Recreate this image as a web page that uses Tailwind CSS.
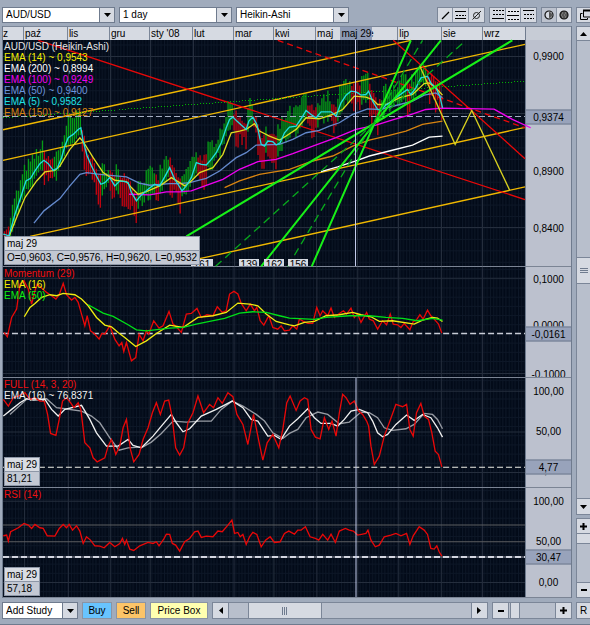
<!DOCTYPE html>
<html lang="pl">
<head>
<meta charset="utf-8">
<meta name="viewport" content="width=device-width, initial-scale=1">
<title>AUD/USD</title>
<script src="https://cdn.jsdelivr.net/npm/@tailwindcss/browser@4"></script>
</head>
<body class="flex h-screen min-h-[480px] flex-col overflow-hidden bg-[#a0abbc] pt-[7px] pl-[2px] font-['Liberation_Sans',Arial,sans-serif] text-[10px] leading-[11px] text-black">

<svg class="absolute size-0" aria-hidden="true">
  <defs>
    <pattern id="gridPrice" width="28" height="34.4" patternUnits="userSpaceOnUse" patternTransform="translate(73 168)"><path d="M1.5 0V35M10.5 0V35M19.5 0V35M0 1.5H28" stroke="#0d1727" stroke-width="3"/></pattern>
    <pattern id="gridStudy" width="28" height="27.5" patternUnits="userSpaceOnUse" patternTransform="translate(73 838)"><path d="M1.5 0V28M10.5 0V28M19.5 0V28M0 1.5H28" stroke="#0d1727" stroke-width="3"/></pattern>
    <path id="months" d="M73.500 0V1800M205.500 0V1800M331.500 0V1800M451.500 0V1800M580.500 0V1800M703.500 0V1800M823.500 0V1800M952.500 0V1800M1075.500 0V1800M1198.500 0V1800M1327.500 0V1800M1450.500 0V1800"/>
  </defs>
</svg>

<header class="flex h-4 shrink-0 items-stretch">
  <div class="flex min-w-0 gap-1">
    <label class="relative block w-[113px]"><span class="sr-only">Instrument</span>
      <select class="block h-4 w-full appearance-none border border-[#6f7b8e] bg-white pl-[3px] text-[10px] leading-[12px]"><option>AUD/USD</option></select>
      <span class="pointer-events-none absolute top-px right-px flex h-[14px] w-[15px] items-center justify-center border-l border-[#6f7b8e] bg-[#d6dae2]"><svg width="7" height="4" viewBox="0 0 7 4"><path d="M0 0H7L3.5 4Z"/></svg></span>
    </label>
    <label class="relative block w-[113px]"><span class="sr-only">Interval</span>
      <select class="block h-4 w-full appearance-none border border-[#6f7b8e] bg-white pl-[3px] text-[10px] leading-[12px]"><option>1 day</option></select>
      <span class="pointer-events-none absolute top-px right-px flex h-[14px] w-[15px] items-center justify-center border-l border-[#6f7b8e] bg-[#d6dae2]"><svg width="7" height="4" viewBox="0 0 7 4"><path d="M0 0H7L3.5 4Z"/></svg></span>
    </label>
    <label class="relative block w-[113px]"><span class="sr-only">Chart type</span>
      <select class="block h-4 w-full appearance-none border border-[#6f7b8e] bg-white pl-[3px] text-[10px] leading-[12px]"><option>Heikin-Ashi</option></select>
      <span class="pointer-events-none absolute top-px right-px flex h-[14px] w-[15px] items-center justify-center border-l border-[#6f7b8e] bg-[#d6dae2]"><svg width="7" height="4" viewBox="0 0 7 4"><path d="M0 0H7L3.5 4Z"/></svg></span>
    </label>
  </div>
  <div class="ml-auto flex gap-1">
    <div class="flex divide-x divide-[#8a94a4] border border-[#7b8698] bg-[#d6dae2]">
      <button aria-label="Trend line" class="flex w-[15px] items-center justify-center"><svg width="14" height="14" viewBox="0 0 14 14" fill="none" stroke="#000"><path d="M4 11L11 4" stroke-width="1.300"/></svg></button>
      <button aria-label="Horizontal lines" class="flex w-[16px] items-center justify-center"><svg width="14" height="14" viewBox="0 0 14 14" fill="none" stroke="#000"><path d="M1 3.500H12M1 10.500H12"/><path d="M2 7.500H12" stroke-dasharray="2 1"/></svg></button>
      <button aria-label="Remove drawings" class="flex w-[15px] items-center justify-center"><svg width="14" height="14" viewBox="0 0 14 14" fill="none" stroke="#222"><circle cx="6.500" cy="7.500" r="3"/><path d="M2.500 11.500L11 3"/></svg></button>
    </div>
    <div class="flex divide-x divide-[#8a94a4] border border-[#7b8698] bg-[#d6dae2]">
      <button aria-label="Grid style 1" class="flex w-[16px] items-center justify-center"><svg width="14" height="14" viewBox="0 0 14 14" fill="none" stroke="#000"><path d="M2 2.500H13M2 6.500H13" stroke-dasharray="2 1"/><path d="M1 10.500H13"/></svg></button>
      <button aria-label="Grid style 2" aria-pressed="true" class="flex w-[15px] items-center justify-center bg-[#e4e6ec]"><svg width="14" height="14" viewBox="0 0 14 14" fill="none" stroke="#000"><path d="M2 3.500H13M2 11.500H13" stroke-dasharray="2 1"/><path d="M1 7.500H13"/></svg></button>
      <button aria-label="Grid style 3" class="flex w-[15px] items-center justify-center"><svg width="14" height="14" viewBox="0 0 14 14" fill="none" stroke="#000"><path d="M1 2.500H12"/><path d="M2 6.500H12M2 10.500H12" stroke-dasharray="2 1"/></svg></button>
    </div>
    <div class="flex divide-x divide-[#8a94a4] border border-[#7b8698] bg-[#d6dae2]">
      <button aria-label="Contrast" class="flex w-[15px] items-center justify-center bg-[#bcc2ce]"><svg width="14" height="14" viewBox="0 0 14 14"><circle cx="7" cy="7" r="4" fill="#d6dae2" stroke="#111" stroke-width="1.200"/><path d="M7 4a3 3 0 0 1 0 6Z" fill="#555"/></svg></button>
      <button aria-label="Shading" class="flex w-[14px] items-center justify-center"><svg width="14" height="14" viewBox="0 0 14 14"><circle cx="7" cy="7" r="4" fill="#555" stroke="#111" stroke-width="1.200"/><path d="M5 5h1m2 0h1M4 7h1m2 0h1M5 9h1m2 0h1" stroke="#999"/></svg></button>
    </div>
    <button aria-label="Detach window" class="flex w-[14px] items-center overflow-hidden border border-r-0 border-[#7b8698] bg-[#d6dae2] pl-[2px]"><svg class="shrink-0" width="13" height="12" viewBox="0 0 13 12" fill="none" stroke="#000"><path d="M4.500 1V8H12V1.500" /><path d="M4 1.500H13" stroke-width="2"/><path d="M3.500 4.500H1.500V10.500H8.500V9"/></svg></button>
  </div>
</header>

<main class="mt-[3px] flex min-h-0 flex-1 gap-1">
  <div class="flex min-w-0 flex-1 flex-col border-r border-l border-[#6f7b8e]">
    <div class="relative flex h-[14px] shrink-0 border-t border-[#7b8698] bg-[#d6dae2] text-[10px] leading-[14px]">
      <div class="flex min-w-0 flex-1 divide-x divide-[#7b8698]">
        <span class="grow-[21] basis-0">z</span><span class="grow-[44] basis-0 pl-px">paź</span><span class="grow-[42] basis-0 pl-px">lis</span><span class="grow-[40] basis-0 pl-px">gru</span><span class="grow-[43] basis-0 pl-px">sty '08</span><span class="grow-[41] basis-0 pl-px">lut</span><span class="grow-[40] basis-0 pl-px">mar</span><span class="grow-[42] basis-0 pl-px">kwi</span><span class="grow-[41] basis-0 pl-px">maj</span><span class="grow-[41] basis-0 pl-px">cze</span><span class="grow-[44] basis-0 pl-px">lip</span><span class="grow-[41] basis-0 pl-px">sie</span><span class="grow-[43] basis-0 pl-px">wrz</span>
      </div>
      <div class="w-[46px] shrink-0 border-l border-[#6f7b8e] bg-[#c7ccd6]"></div>
      <span class="absolute top-0 left-[59.400%] w-8 bg-[#8e9ab4] text-center whitespace-nowrap">maj 29</span>
    </div>

    <!-- Price -->
    <section class="flex min-h-0 grow-[228] basis-0 border-b border-[#7b8494]" aria-label="Price">
      <div class="relative min-w-0 flex-1 bg-[#020a18]">
        <svg class="absolute inset-0 z-10 size-full overflow-visible" viewBox="9 120 1569 681" preserveAspectRatio="none" fill="none" stroke-width="3" shape-rendering="crispEdges">
          <rect x="9" y="120" width="1569" height="681" fill="url(#gridPrice)"/>
          <svg x="9" y="120" width="1569" height="681" viewBox="9 120 1569 681" preserveAspectRatio="none"><use href="#months" stroke="#252e3d"/></svg>
          <path d="M9 169H1578M9 342H1578M9 514H1578M9 685H1578" stroke="#252e3d"/>
          <g id="candles"></g>
          <g stroke="#f0b800" stroke-width="4" shape-rendering="auto">
            <path d="M9 390L1235 121M9 482L1578 133M90 711L1578 383M600 778L1578 562"/>
          </g>
          <path d="M115 121L1578 600M1182 121L1578 477" stroke="#e80808" stroke-width="4" shape-rendering="auto"/>
          <path d="M835 121L1578 384" stroke="#e80808" stroke-width="4" stroke-dasharray="18 12" shape-rendering="auto"/>
          <path d="M9 354L1575 244" stroke="#00b400" stroke-dasharray="3 6"/>
          <path d="M9 350H1578" stroke="#a4aec2" stroke-width="5" stroke-dasharray="18 9"/>
          <g stroke-width="4" shape-rendering="auto">
          <polyline stroke="#6489cc" points="102,671 132,634 180,597 210,559 240,524 260,519 300,524 380,532 420,551 450,557 510,552 540,552 570,549 620,536 660,514 710,474 740,459 770,436 840,434 880,419 920,399 960,392 990,379 1020,369 1060,344 1105,327 1140,329 1190,317 1240,304 1275,286 1310,279 1330,294"/>
          <polyline stroke="#f000f0" points="388,584 450,586 500,577 540,577 575,574 620,557 670,539 720,509 775,486 830,479 880,462 940,439 1010,414 1070,389 1130,376 1185,359 1230,346 1280,329 1330,325 1485,328 1540,359 1595,384"/>
          <polyline stroke="#d88410" points="675,564 720,544 780,524 870,509 940,484 1000,469 1060,439 1110,421 1170,407 1220,394 1270,374 1330,364"/>
          <polyline stroke="#ffffff" points="965,516 1015,502 1070,484 1110,469 1170,454 1240,436 1290,412 1330,409"/>
          <polyline stroke="#e0dc20" points="27,711 50,654 75,594 110,544 135,517 165,512 180,499 210,449 240,414 250,426 280,474 310,519 345,542 380,546 395,564 415,584 440,576 480,559 515,534 540,549 555,559 575,544 600,519 640,504 670,464 695,399 720,394 740,389 765,372 780,394 810,409 840,421 860,409 890,389 920,354 960,357 1000,344 1030,329 1065,289 1100,292 1120,299 1135,314 1160,314 1200,294 1240,284 1275,251 1290,249 1310,264 1330,286"/>
          <polyline id="fast" stroke="#20dce0" points="10,704 27,709 45,644 62,594 78,544 92,536 105,514 120,492 132,482 145,492 160,512 172,506 185,474 195,439 205,414 220,404 235,389 243,384 250,424 262,469 275,499 290,529 303,554 315,549 330,534 345,559 360,544 375,546 385,549 395,579 410,604 425,586 445,569 465,554 480,559 495,532 510,504 525,539 535,554 547,574 560,559 575,534 590,489 605,494 620,496 635,479 650,459 665,429 680,384 690,359 700,352 712,364 725,376 740,389 748,364 760,352 772,374 785,434 795,439 805,424 820,426 830,436 842,429 855,399 870,382 890,379 910,349 920,332 935,344 950,354 965,336 980,336 995,336 1010,349 1025,309 1040,286 1055,274 1070,276 1085,286 1100,284 1108,274 1120,304 1135,329 1145,331 1160,315 1172,309 1190,294 1210,279 1225,269 1235,284 1250,264 1265,234 1285,229 1295,249 1310,264 1322,289 1330,324"/>
          </g>
          <g stroke="#18f018">
            <path d="M560 711L1540 121M785 801L1325 121M937 801L1235 121" stroke-width="6" shape-rendering="auto"/>
            <path d="M648 801L1400 121M865 801L1270 121" stroke="#08a81c" stroke-width="4" stroke-dasharray="24 15" shape-rendering="auto"/>
          </g>
          <polyline stroke="#d8d020" stroke-width="4" shape-rendering="auto" points="1262,199 1368,434 1418,332 1532,572"/>
          <path d="M1070 120V801" stroke="#c4ccec"/>
        </svg>
        <div class="absolute top-px left-px z-20 text-[10px] leading-[11px] whitespace-nowrap">
          <p class="text-[#e4e4e4]">AUD/USD (Heikin-Ashi)</p>
          <p class="text-[#f4f000]">EMA (14) ~ 0,9543</p>
          <p class="text-white">EMA (200) ~ 0,8994</p>
          <p class="text-[#f000f0]">EMA (100) ~ 0,9249</p>
          <p class="text-[#6c94dc]">EMA (50) ~ 0,9400</p>
          <p class="text-[#20e0e4]">EMA (5) ~ 0,9582</p>
          <p class="text-[#d88410]">EMA (150) ~ 0,9127</p>
        </div>
        <div class="absolute inset-x-0 bottom-0 z-20 h-[7px] overflow-hidden text-center text-[10px] leading-[11px]">
          <span class="absolute left-[36%] w-[22px] bg-[#d6dae2]">161</span>
          <span class="absolute left-[45.200%] w-5 bg-[#d6dae2]">139</span>
          <span class="absolute left-[50%] w-5 bg-[#d6dae2]">162</span>
          <span class="absolute left-[54.600%] w-5 bg-[#d6dae2]">156</span>
        </div>
        <div class="absolute bottom-px left-px z-20 border border-[#8d96a6] whitespace-nowrap">
          <p class="h-[14px] border-b border-[#8d96a6] bg-[#d9dce3] px-[2px] leading-[14px]">maj 29</p>
          <p class="h-[13px] bg-[#c3c8d3] px-[2px] leading-[13px]">O=0,9603, C=0,9576, H=0,9620, L=0,9532</p>
        </div>
      </div>
      <div class="relative w-[46px] shrink-0 overflow-hidden border-l border-[#6f7b8e] bg-[#bcc1ce] text-center text-[10px] leading-[13px]">
        <span class="absolute inset-x-0 top-[7%] -translate-y-1/2">0,9900</span>
        <span class="absolute inset-x-0 top-[34%] -translate-y-1/2 border-y border-[#6f7b8e] bg-[#98a3bb]">0,9374</span>
        <span class="absolute inset-x-0 top-[58%] -translate-y-1/2">0,8900</span>
        <span class="absolute inset-x-0 top-[83%] -translate-y-1/2">0,8400</span>
      </div>
    </section>

    <!-- Momentum -->
    <section class="flex min-h-0 grow-[110] basis-0 border-b border-[#7b8494]" aria-label="Momentum">
      <div class="relative min-w-0 flex-1 bg-[#020a18]">
        <svg class="absolute inset-0 size-full" viewBox="9 804 1569 327" preserveAspectRatio="none" fill="none" stroke-width="3" shape-rendering="crispEdges">
          <rect x="9" y="804" width="1569" height="327" fill="url(#gridStudy)"/>
          <use href="#months" stroke="#252e3d"/><path d="M9 838H1578M9 1123H1578" stroke="#252e3d"/>
          <path d="M9 1003H1578" stroke="#c8ccd6" stroke-width="4" stroke-dasharray="18 9" shape-rendering="auto"/>
          <g transform="translate(0 795)" stroke-width="4" shape-rendering="auto">
            <polyline stroke="#e80808" points="12,205 22,218 35,160 50,135 60,60 72,50 85,75 95,120 105,80 112,60 125,72 140,85 155,95 168,105 178,92 190,58 200,92 215,108 225,100 235,115 245,150 255,185 262,155 272,200 283,208 298,225 306,208 315,210 330,185 345,225 358,245 366,235 372,262 380,235 395,290 408,280 418,210 430,230 440,200 447,210 462,170 478,192 490,185 508,142 520,180 532,190 545,205 560,150 575,148 592,133 605,160 622,152 640,155 653,128 668,145 680,140 690,90 703,82 715,90 725,118 740,140 752,120 765,140 772,130 782,170 793,183 808,155 820,190 835,195 845,185 855,200 870,198 880,185 892,195 900,165 912,172 925,178 940,178 952,130 962,155 970,140 985,155 995,132 1005,160 1020,148 1032,140 1042,150 1055,132 1065,160 1075,150 1085,175 1102,145 1110,165 1122,170 1135,195 1150,170 1162,182 1173,150 1182,180 1195,182 1205,190 1215,178 1232,197 1242,172 1250,170 1262,152 1272,165 1285,138 1295,155 1305,165 1318,180 1328,207"/>
            <polyline stroke="#f0ec10" points="73,158 90,130 105,118 125,100 150,92 170,95 190,88 225,92 245,105 265,125 290,160 315,183 335,188 355,205 375,220 408,247 440,230 470,208 510,183 550,190 595,160 640,155 680,145 715,117 750,120 775,125 800,150 830,172 870,182 885,185 915,175 945,172 980,155 1020,152 1060,145 1085,152 1115,158 1140,172 1180,170 1245,180 1270,168 1300,160 1315,162 1330,172"/>
            <polyline stroke="#00e018" points="265,122 310,147 340,157 385,182 410,197 440,200 510,192 550,190 590,180 630,172 675,163 720,147 760,143 800,145 840,155 870,162 945,166 980,160 1050,155 1110,155 1160,160 1210,163 1255,170 1300,163 1330,168"/>
          </g>
        </svg>
        <div class="absolute top-px left-px text-[10px] leading-[11px] whitespace-nowrap">
          <p class="text-[#f01010]">Momentum (29)</p><p class="text-[#f4f000]">EMA (16)</p><p class="text-[#10f010]">EMA (50)</p>
        </div>
      </div>
      <div class="relative w-[46px] shrink-0 overflow-hidden border-l border-[#6f7b8e] bg-[#bcc1ce] text-center text-[10px] leading-[13px]">
        <span class="absolute inset-x-0 top-[11%] -translate-y-1/2">0,1000</span>
        <span class="absolute inset-x-0 top-[53%] -translate-y-1/2">0,0000</span>
        <span class="absolute inset-x-0 top-[61%] -translate-y-1/2 border-y border-[#6f7b8e] bg-[#98a3bb]">-0,0161</span>
        <span class="absolute inset-x-0 top-[98%] -translate-y-1/2">-0,1000</span>
      </div>
    </section>

    <!-- Full stochastic -->
    <section class="flex min-h-0 grow-[110] basis-0 border-b border-[#7b8494]" aria-label="Full stochastic">
      <div class="relative min-w-0 flex-1 bg-[#020a18]">
        <svg class="absolute inset-0 size-full" viewBox="9 1134 1569 327" preserveAspectRatio="none" fill="none" stroke-width="3" shape-rendering="crispEdges">
          <rect x="9" y="1134" width="1569" height="327" fill="url(#gridStudy)"/>
          <use href="#months" stroke="#252e3d"/><path d="M9 1174H1578M9 1296H1578M9 1417H1578" stroke="#252e3d"/>
          <path d="M9 1401H1578" stroke="#f0f0e8" stroke-dasharray="18 9"/>
          <g transform="translate(0 1128)" stroke-width="4" shape-rendering="auto">
            <polyline stroke="#989ca4" points="30,115 80,70 140,68 170,95 195,98 245,105 275,120 300,140 330,185 358,222 385,215 430,212 455,198 485,172 520,135 560,138 600,135 635,135 665,100 698,75 730,90 770,115 795,135 820,170 850,187 870,172 895,160 920,125 955,108 985,115 1020,143 1050,138 1085,108 1110,110 1135,125 1155,155 1180,163 1220,158 1245,145 1275,112 1300,115 1315,130 1330,158"/>
            <polyline stroke="#f0f0f0" points="10,120 35,100 60,80 80,68 100,72 135,70 155,100 175,120 195,100 245,88 270,130 290,170 320,210 355,210 385,190 400,208 425,215 460,180 485,150 515,115 530,140 550,167 570,158 605,120 650,100 698,75 730,95 755,130 775,135 805,180 825,178 845,190 870,150 895,128 925,98 945,125 965,142 995,142 1015,150 1035,130 1055,105 1080,100 1105,110 1120,135 1135,170 1150,182 1165,175 1190,145 1222,117 1245,133 1270,115 1295,125 1315,155 1330,183"/>
            <polyline stroke="#e80808" points="10,70 25,90 40,65 55,60 75,50 90,70 105,65 120,75 133,75 143,115 152,172 168,178 178,130 188,75 200,65 212,80 222,95 235,80 243,100 255,200 270,215 280,245 292,257 315,245 325,210 335,190 348,235 360,210 370,155 380,130 392,220 402,257 418,235 430,190 445,155 458,110 470,80 482,115 495,75 507,72 517,120 528,215 540,237 552,215 565,140 580,110 595,60 612,110 630,85 642,95 655,65 668,82 685,50 700,62 712,115 730,145 745,205 762,115 778,195 790,252 803,200 820,175 838,215 850,160 862,80 872,60 890,103 902,75 915,65 925,70 935,160 948,183 962,188 975,125 988,160 998,135 1010,180 1020,110 1030,55 1040,65 1052,85 1065,75 1078,105 1090,115 1102,135 1108,150 1115,210 1125,265 1140,240 1155,180 1170,140 1190,85 1210,92 1222,85 1232,160 1242,180 1252,110 1265,82 1275,120 1288,130 1298,170 1308,225 1318,235 1328,272"/>
          </g>
          <path d="M1070 1134V1461" stroke="#c4ccec"/>
        </svg>
        <div class="absolute top-px left-px text-[10px] leading-[11px] whitespace-nowrap">
          <p class="text-[#f01010]">FULL (14, 3, 20)</p><p class="text-[#f0f0f0]">EMA (16) ~ 76,8371</p>
        </div>
        <div class="absolute bottom-px left-px w-9 border border-[#8d96a6]">
          <p class="h-[14px] border-b border-[#8d96a6] bg-[#d9dce3] px-[2px] leading-[14px]">maj 29</p><p class="h-[13px] bg-[#c3c8d3] px-[2px] leading-[13px]">81,21</p>
        </div>
      </div>
      <div class="relative w-[46px] shrink-0 overflow-hidden border-l border-[#6f7b8e] bg-[#bcc1ce] text-center text-[10px] leading-[13px]">
        <span class="absolute inset-x-0 top-[12%] -translate-y-1/2">100,00</span>
        <span class="absolute inset-x-0 top-[49%] -translate-y-1/2">50,00</span>
        <span class="absolute inset-x-0 top-[85%] -translate-y-1/2">0,00</span>
        <span class="absolute inset-x-0 top-[82%] -translate-y-1/2 border-y border-[#6f7b8e] bg-[#98a3bb]">4,77</span>
      </div>
    </section>

    <!-- RSI -->
    <section class="flex min-h-0 grow-[110] basis-0 border-b border-[#7b8494]" aria-label="RSI">
      <div class="relative min-w-0 flex-1 bg-[#020a18]">
        <svg class="absolute inset-0 size-full" viewBox="9 1464 1569 327" preserveAspectRatio="none" fill="none" stroke-width="3" shape-rendering="crispEdges">
          <rect x="9" y="1464" width="1569" height="327" fill="url(#gridStudy)"/>
          <use href="#months" stroke="#252e3d"/><path d="M9 1504H1578M9 1747H1578" stroke="#252e3d"/>
          <path d="M9 1575H1578M9 1625H1578" stroke="#5c5e60"/>
          <path d="M9 1670H1578" stroke="#4c5260" stroke-width="5"/><path d="M9 1670H1578" stroke="#d4d6e0" stroke-width="5" stroke-dasharray="18 9"/>
          <polyline transform="translate(0 1455)" stroke="#e80808" stroke-width="4" shape-rendering="auto" points="10,152 20,150 25,168 32,140 55,128 72,115 85,120 95,130 105,118 120,128 130,130 142,152 165,153 178,130 190,118 200,128 208,118 218,135 230,122 240,138 250,175 260,155 272,165 285,182 300,183 313,188 330,172 345,185 360,175 368,160 375,178 380,165 390,192 402,196 420,182 445,172 460,175 470,170 478,182 492,162 500,147 510,148 518,175 528,180 540,198 555,170 570,160 585,140 595,138 605,157 620,153 640,155 655,138 668,140 685,120 697,105 705,145 715,142 722,155 730,148 740,178 750,155 760,142 772,148 785,185 798,165 812,155 825,172 842,170 855,145 868,138 885,147 895,135 905,135 918,125 932,155 948,160 958,165 970,148 985,165 995,147 1008,172 1020,138 1038,130 1050,135 1062,138 1075,150 1090,147 1100,145 1106,135 1115,165 1128,185 1140,180 1155,155 1175,150 1190,145 1205,152 1222,145 1232,178 1242,152 1260,125 1275,135 1285,148 1295,190 1305,192 1313,182 1320,200 1328,213"/>
          <path d="M1070 1464V1791" stroke="#c4ccec"/>
        </svg>
        <p class="absolute top-px left-px text-[10px] leading-[11px] text-[#f01010]">RSI (14)</p>
        <div class="absolute bottom-px left-px w-9 border border-[#8d96a6]">
          <p class="h-[14px] border-b border-[#8d96a6] bg-[#d9dce3] px-[2px] leading-[14px]">maj 29</p><p class="h-[13px] bg-[#c3c8d3] px-[2px] leading-[13px]">57,18</p>
        </div>
      </div>
      <div class="relative w-[46px] shrink-0 overflow-hidden border-l border-[#6f7b8e] bg-[#bcc1ce] text-center text-[10px] leading-[13px]">
        <span class="absolute inset-x-0 top-[12%] -translate-y-1/2">100,00</span>
        <span class="absolute inset-x-0 top-[49%] -translate-y-1/2">50,00</span>
        <span class="absolute inset-x-0 top-[63%] -translate-y-1/2 border-y border-[#6f7b8e] bg-[#98a3bb]">30,47</span>
        <span class="absolute inset-x-0 top-[86%] -translate-y-1/2">0,00</span>
      </div>
    </section>
  </div>

  <!-- Vertical scroll and scale -->
  <aside class="flex w-[14px] shrink-0 flex-col gap-[3px]">
    <div class="flex min-h-0 flex-1 flex-col border border-r-0 border-[#7b8698] bg-[#b8bfcc]">
      <button aria-label="Scroll up" class="flex h-[14px] shrink-0 items-center justify-center border-b border-[#7b8698] bg-[#d6dae2]"><svg width="7" height="4" viewBox="0 0 7 4"><path d="M0 4H7L3.500 0Z"/></svg></button>
      <div class="grow-[216] basis-0"></div>
      <div class="flex h-[27px] shrink-0 items-center justify-center border-y border-[#7b8698] bg-[#d6dae2]"><svg width="8" height="6" viewBox="0 0 8 6" stroke="#6f7b8e"><path d="M0 .5H8M0 2.500H8M0 4.500H8"/></svg></div>
      <div class="grow-[214] basis-0"></div>
      <button aria-label="Scroll down" class="flex h-4 shrink-0 items-center justify-center border-t border-[#7b8698] bg-[#d6dae2]"><svg width="7" height="4" viewBox="0 0 7 4"><path d="M0 0H7L3.500 4Z"/></svg></button>
    </div>
    <div class="flex h-[80px] shrink-0 flex-col border border-r-0 border-[#7b8698] bg-[#b8bfcc]">
      <button aria-label="Zoom scale in" class="flex h-[15px] shrink-0 items-center justify-center border-b border-[#7b8698] bg-[#d6dae2]"><svg width="7" height="7" viewBox="0 0 7 7" stroke="#000" stroke-width="2"><path d="M0 3.500H7M3.500 0V7"/></svg></button>
      <input type="range" aria-label="Vertical scale" min="0" max="100" value="0" class="m-0 min-h-0 w-full flex-1 appearance-none bg-transparent [writing-mode:vertical-lr] [&::-webkit-slider-thumb]:h-[10px] [&::-webkit-slider-thumb]:w-[13px] [&::-webkit-slider-thumb]:appearance-none [&::-webkit-slider-thumb]:border-b [&::-webkit-slider-thumb]:border-[#7b8698] [&::-webkit-slider-thumb]:bg-[#d6dae2]">
      <button aria-label="Zoom scale out" class="flex h-[15px] shrink-0 items-center justify-center border-t border-[#7b8698] bg-[#d6dae2]"><svg width="6" height="2" viewBox="0 0 6 2"><path d="M0 0H6V2H0Z"/></svg></button>
    </div>
  </aside>
</main>

<footer class="mt-1 flex h-[17px] shrink-0 gap-1">
  <label class="relative block w-[76px] shrink-0"><span class="sr-only">Add Study</span>
    <select class="block h-[17px] w-full appearance-none border border-[#6f7b8e] bg-white pl-[3px] text-[10px] leading-[13px]"><option>Add Study</option></select>
    <span class="pointer-events-none absolute top-px right-px flex h-[15px] w-[15px] items-center justify-center border-l border-[#6f7b8e] bg-[#d6dae2]"><svg width="7" height="4" viewBox="0 0 7 4"><path d="M0 0H7L3.500 4Z"/></svg></span>
  </label>
  <button class="w-[30px] shrink-0 border border-[#8a94a4] bg-[#68c4ff]">Buy</button>
  <button class="w-[30px] shrink-0 border border-[#8a94a4] bg-[#fcc468]">Sell</button>
  <button class="w-[58px] shrink-0 border border-[#8a94a4] bg-[#ffffb0]">Price Box</button>
  <div class="flex min-w-0 flex-1 border border-[#7b8698] bg-[#b8bfcc]">
    <button aria-label="Scroll left" class="flex w-4 shrink-0 items-center justify-center border-r border-[#7b8698] bg-[#d6dae2]"><svg width="4" height="7" viewBox="0 0 4 7"><path d="M4 0V7L0 3.500Z"/></svg></button>
    <div class="grow-[19] basis-0"></div>
    <div class="flex grow-[74] basis-0 items-center justify-center border-x border-[#7b8698] bg-[#d6dae2]"><svg width="6" height="8" viewBox="0 0 6 8" stroke="#6f7b8e"><path d="M.5 0V8M2.500 0V8M4.500 0V8"/></svg></div>
    <div class="grow-[152] basis-0"></div>
    <button aria-label="Scroll right" class="flex w-4 shrink-0 items-center justify-center border-l border-[#7b8698] bg-[#d6dae2]"><svg width="4" height="7" viewBox="0 0 4 7"><path d="M0 0V7L4 3.500Z"/></svg></button>
  </div>
  <div class="flex w-[80px] shrink-0 border border-[#7b8698] bg-[#b8bfcc]">
    <button aria-label="Zoom out" class="flex w-4 shrink-0 items-center justify-center border-r border-[#7b8698] bg-[#d6dae2]"><svg width="6" height="2" viewBox="0 0 6 2"><path d="M0 0H6V2H0Z"/></svg></button>
    <input type="range" aria-label="Time zoom" min="0" max="100" value="3" class="m-0 h-[15px] min-w-0 flex-1 appearance-none bg-transparent [&::-webkit-slider-thumb]:h-[15px] [&::-webkit-slider-thumb]:w-[10px] [&::-webkit-slider-thumb]:appearance-none [&::-webkit-slider-thumb]:border-x [&::-webkit-slider-thumb]:border-[#7b8698] [&::-webkit-slider-thumb]:bg-[#d6dae2]">
    <button aria-label="Zoom in" class="flex w-4 shrink-0 items-center justify-center border-l border-[#7b8698] bg-[#d6dae2]"><svg width="7" height="7" viewBox="0 0 7 7" stroke="#000" stroke-width="2"><path d="M0 3.500H7M3.500 0V7"/></svg></button>
  </div>
  <button aria-label="Reset" class="w-[14px] shrink-0 border border-r-0 border-[#7b8698] bg-[#d6dae2]">R</button>
</footer>
<div class="mt-[5px] -ml-[2px] h-px shrink-0 bg-[#6f7b8e]"></div>

<script>
// Heikin-Ashi bars: green above the fast average while it rises, red below it while it falls.
const pts = document.getElementById('fast').getAttribute('points').trim().split(/\s+/).map(p => p.split(',').map(Number));
let seed = 7;
const rnd = () => (seed = (seed * 16807) % 2147483647) / 2147483647;
let up = '', down = '', k = 0;
for (let x = 13.5; x < 1330; x += 6) {
  while (k < pts.length - 2 && pts[k + 1][0] < x) k++;
  const [x0, y0] = pts[k], [x1, y1] = pts[k + 1];
  const y = y0 + (y1 - y0) * (x - x0) / (x1 - x0);
  if (y1 <= y0) up += `M${x} ${Math.max(185, y - 24 - rnd() * 42)}V${Math.min(712, y + 12 + rnd() * 26)}`;
  else down += `M${x} ${y - 10 - rnd() * 24}V${Math.min(712, y + 24 + rnd() * 56)}`;
}
document.getElementById('candles').innerHTML = `<g stroke-width="4" shape-rendering="auto"><path d="${up}" stroke="#069a16"/><path d="${down}" stroke="#c00410"/></g>`;
</script>
</body>
</html>
